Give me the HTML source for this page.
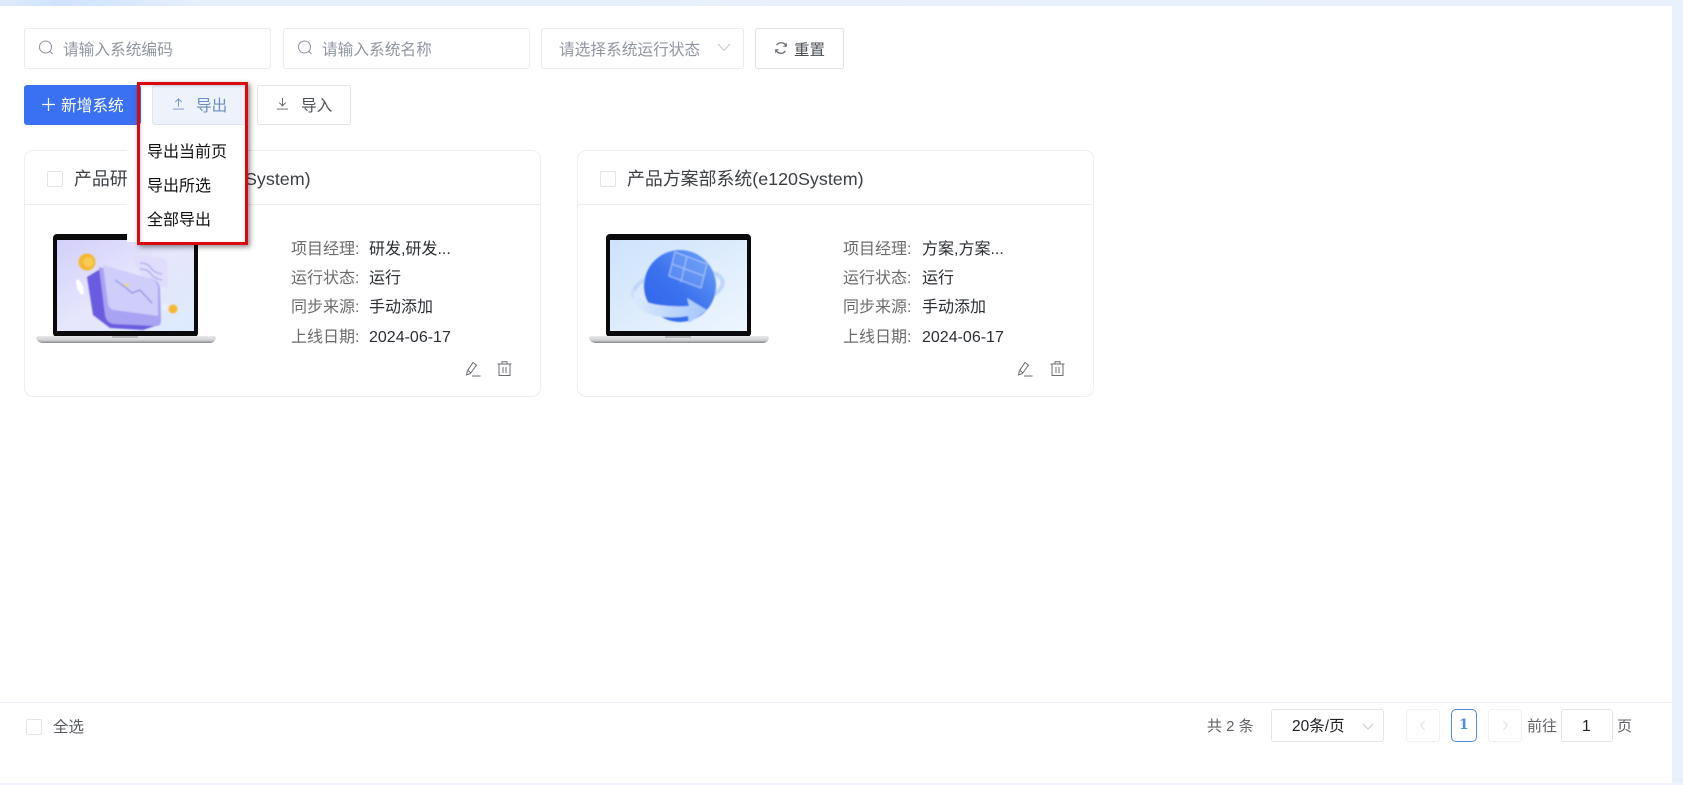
<!DOCTYPE html>
<html lang="zh"><head><meta charset="utf-8"><title>系统管理</title>
<style>
html,body{margin:0;padding:0;width:1683px;height:785px;overflow:hidden;background:#fff}
body{position:relative;font-family:"Liberation Sans","Noto Sans CJK SC",sans-serif;font-size:16px;color:#303133}
.a{position:absolute;box-sizing:border-box}
.t{position:absolute;white-space:nowrap;line-height:22px;height:22px}
.box{position:absolute;box-sizing:border-box;border:1px solid #eaecf0;border-radius:3px;background:#fff}
.ph{color:#8f96a2}
.lb{color:#6d6a6a}
.v{color:#2a2e33}
.cb{position:absolute;box-sizing:border-box;width:16px;height:16px;border:1px solid #e2e4e9;border-radius:2px;background:#fff}
.card{position:absolute;box-sizing:border-box;width:517px;height:247px;top:150px;border:1px solid #eceef2;border-radius:9px;background:#fff}
svg{position:absolute;overflow:visible}
</style></head><body>
<div class="a" style="left:0;top:0;width:1683px;height:6px;background:linear-gradient(90deg,#dfeafb 0,#cfe2fe 60px,#d6e6fd 110px,#e6effc 200px,#e8f0fd 100%)"></div>
<div class="a" style="left:1672px;top:0;width:11px;height:785px;background:#e9f1fd"></div>
<div class="a" style="left:0;top:783px;width:1683px;height:2px;background:#eef3fc"></div>

<!-- search row -->
<div class="box" style="left:24px;top:28px;width:247px;height:41px"></div>
<svg style="left:38px;top:40px" width="16" height="16" viewBox="0 0 16 16" fill="none" stroke="#8b93a0" stroke-width="1"><circle cx="7.5" cy="7" r="6"/><path d="M12 11.5l2.5 2.5"/></svg>
<span class="t ph" style="left:63px;top:40px;font-size:15.7px">请输入系统编码</span>
<div class="box" style="left:283px;top:28px;width:247px;height:41px"></div>
<svg style="left:297px;top:40px" width="16" height="16" viewBox="0 0 16 16" fill="none" stroke="#8b93a0" stroke-width="1"><circle cx="7.5" cy="7" r="6"/><path d="M12 11.5l2.5 2.5"/></svg>
<span class="t ph" style="left:322px;top:40px;font-size:15.7px">请输入系统名称</span>
<div class="box" style="left:541px;top:28px;width:203px;height:41px"></div>
<span class="t ph" style="left:559px;top:40px;font-size:15.7px">请选择系统运行状态</span>
<svg style="left:717px;top:43px" width="14" height="9" viewBox="0 0 14 9" fill="none" stroke="#c2c6cd" stroke-width="1"><path d="M1 1l6 6.5L13 1"/></svg>
<div class="box" style="left:755px;top:28px;width:89px;height:41px;border-color:#dfe2e6"></div>
<svg style="left:774px;top:41px" width="14" height="14" viewBox="0 0 14 14" fill="none" stroke="#5d6168" stroke-width="1.2"><path d="M12 5A5.3 5.3 0 0 0 2.6 4.2"/><path d="M2 9a5.3 5.3 0 0 0 9.4.8"/><path d="M12.3 2.2V5.3H9.4" stroke-width="1"/><path d="M1.7 11.8V8.7h2.9" stroke-width="1"/></svg>
<span class="t" style="left:794px;top:40px;font-size:15.5px;color:#4a4e55">重置</span>

<!-- action row -->
<div class="a" style="left:24px;top:85px;width:117px;height:40px;background:#3a71f2;border-radius:3px"></div>
<svg style="left:42px;top:98px" width="13" height="13" viewBox="0 0 14 14" stroke="#fff" stroke-width="1.3"><path d="M7 0v14M0 7h14"/></svg>
<span class="t" style="left:61px;top:96px;color:#fff;font-size:15.7px">新增系统</span>
<div class="box" style="left:152px;top:85px;width:94px;height:40px;background:#edf2fb;border-color:#dde4f0"></div>
<svg style="left:172px;top:97px" width="13" height="13" viewBox="0 0 14 14" fill="none" stroke="#6f93cf" stroke-width="1"><path d="M7 10.5V2M3.5 5.5L7 2l3.5 3.5M1 13h12"/></svg>
<span class="t" style="left:196px;top:96px;color:#6f8dc2;font-size:15.7px">导出</span>
<div class="box" style="left:257px;top:85px;width:94px;height:40px;border-color:#e0e3e7"></div>
<svg style="left:276px;top:97px" width="13" height="13" viewBox="0 0 14 14" fill="none" stroke="#5d6168" stroke-width="1"><path d="M7 1v8.5M3.5 6L7 9.5 10.5 6M1 13h12"/></svg>
<span class="t" style="left:301px;top:96px;color:#4a4e55;font-size:15.7px">导入</span>

<!-- card 1 -->
<div class="card" style="left:24px"><div class="a" style="left:0;top:53px;width:515px;height:1px;background:#eceef2"></div></div>
<div class="cb" style="left:47px;top:171px"></div>
<span class="t" style="left:74px;top:168px;font-size:17.9px;color:#3b3e43">产品研发部系统(e120System)</span>
<svg style="left:36px;top:234px" width="180" height="110" viewBox="0 0 180 110">
<defs>
<linearGradient id="s1" x1="0" y1="0" x2="1" y2="1"><stop offset="0" stop-color="#d3cffb"/><stop offset=".5" stop-color="#e6e6fc"/><stop offset="1" stop-color="#dcebfd"/></linearGradient>
<linearGradient id="s2" x1="0" y1="0" x2="1" y2="1"><stop offset="0" stop-color="#cde2fb"/><stop offset="1" stop-color="#eef6fe"/></linearGradient>
<linearGradient id="g" x1="1" y1="0" x2="0" y2="1"><stop offset="0" stop-color="#6ea3f8"/><stop offset=".55" stop-color="#3a70ee"/><stop offset="1" stop-color="#2f66ea"/></linearGradient>
<linearGradient id="rib" x1="0" y1="0" x2="1" y2="0"><stop offset="0" stop-color="#dbe9fd"/><stop offset="1" stop-color="#a4c6fa"/></linearGradient>
<linearGradient id="base" x1="0" y1="0" x2="0" y2="1"><stop offset="0" stop-color="#e8e9eb"/><stop offset=".6" stop-color="#d0d1d4"/><stop offset="1" stop-color="#85878a"/></linearGradient>
<filter id="b"><feGaussianBlur stdDeviation=".8"/></filter>
</defs>
<rect x="17" y="0" width="145" height="103" rx="4" fill="#0a0a0c"/>
<rect x="21" y="6" width="137" height="91" fill="url(#s1)"/>
<g filter="url(#b)">
<path d="M96 21l30 3q4 1 5 5l1 25-22-4-14-25z" fill="#dfddfb"/>
<path d="M104 29q8 0 11 5t11 6M104 35q8 0 11 5t11 6" fill="none" stroke="#9a97ea" stroke-width="1"/>
<path d="M51 43l15-9 56 54v3l-15 5-33-2-17-13z" fill="#6a5be0"/>
<path d="M63 33l53 12q7 2 8 9l1 33q0 6-7 5L77 90q-7-2-8-9z" fill="#a8a3f2"/>
<path d="M67 31l48 14q6 2 7 8l0 29-44-6q-5-1-6-6z" fill="#cfcdf9"/>
<path d="M79 46l10 7 7 6 8-3 12 13" fill="none" stroke="#7f7ce0" stroke-width="1"/>
<circle cx="91" cy="51" r="2" fill="#e6d980"/>
<circle cx="51" cy="28" r="8.5" fill="#f6b82e"/><circle cx="52.5" cy="28" r="5" fill="#f9cb55"/>
<circle cx="137" cy="75" r="4.5" fill="#f6b82e"/>
<ellipse cx="44" cy="53" rx="3" ry="8" fill="#fff" transform="rotate(-20 44 53)"/>
<circle cx="129" cy="73" r="3" fill="#e9f0fe"/>
</g>
<path d="M1 102h178l1 2q-1 4-5 5H6q-5-1-6-5z" fill="url(#base)"/>
<rect x="76" y="102" width="26" height="2" fill="#b9babd"/>
</svg>
<span class="t lb" style="left:291px;top:239px">项目经理:</span><span class="t v" style="left:369px;top:239px">研发,研发...</span>
<span class="t lb" style="left:291px;top:268px">运行状态:</span><span class="t v" style="left:369px;top:268px">运行</span>
<span class="t lb" style="left:291px;top:297px">同步来源:</span><span class="t v" style="left:369px;top:297px">手动添加</span>
<span class="t lb" style="left:291px;top:327px">上线日期:</span><span class="t v" style="left:369px;top:327px">2024-06-17</span>
<svg style="left:465px;top:361px" width="16" height="16" viewBox="0 0 16 16" fill="none" stroke="#6a6d72" stroke-width="1"><path d="M1.5 14l.8-4L8 1.5l3.5 2.5L5.5 12.5zM3 9.5l3 2.5M7 15h8.5"/></svg>
<svg style="left:497px;top:361px" width="15" height="15" viewBox="0 0 15 15" fill="none" stroke="#6a6d72" stroke-width="1"><path d="M0.5 3h14M5 3V.8h5V3M2 3v11.5h11V3M6 6v6M9 6v6"/></svg>

<!-- card 2 -->
<div class="card" style="left:577px"><div class="a" style="left:0;top:53px;width:515px;height:1px;background:#eceef2"></div></div>
<div class="cb" style="left:600px;top:171px"></div>
<span class="t" style="left:627px;top:168px;font-size:17.9px;color:#3b3e43">产品方案部系统(e120System)</span>
<svg style="left:589px;top:234px" width="180" height="110" viewBox="0 0 180 110">
<rect x="17" y="0" width="145" height="103" rx="4" fill="#0a0a0c"/>
<rect x="21" y="6" width="137" height="91" fill="url(#s2)"/>
<g filter="url(#b)">
<ellipse cx="89" cy="54" rx="45" ry="18" fill="none" stroke="#bdd6fb" stroke-width="4" transform="rotate(-8 89 54)"/>
<circle cx="91" cy="52" r="36" fill="url(#g)"/>
<path d="M86 18l32 12-6 24-32-12zM98 22l-6 26M83 30l32 12" fill="#77a5f7" fill-opacity=".45" stroke="#a9c6fa" stroke-width="1"/>
<path d="M44 54q4 14 26 17 16 2 30 1l-2-8 20 12-18 13-1-7q-16 3-32 0-25-5-23-28z" fill="url(#rib)"/>
</g>
<path d="M1 102h178l1 2q-1 4-5 5H6q-5-1-6-5z" fill="url(#base)"/>
<rect x="76" y="102" width="26" height="2" fill="#b9babd"/>
</svg>
<span class="t lb" style="left:843px;top:239px">项目经理:</span><span class="t v" style="left:922px;top:239px">方案,方案...</span>
<span class="t lb" style="left:843px;top:268px">运行状态:</span><span class="t v" style="left:922px;top:268px">运行</span>
<span class="t lb" style="left:843px;top:297px">同步来源:</span><span class="t v" style="left:922px;top:297px">手动添加</span>
<span class="t lb" style="left:843px;top:327px">上线日期:</span><span class="t v" style="left:922px;top:327px">2024-06-17</span>
<svg style="left:1017px;top:361px" width="16" height="16" viewBox="0 0 16 16" fill="none" stroke="#6a6d72" stroke-width="1"><path d="M1.5 14l.8-4L8 1.5l3.5 2.5L5.5 12.5zM3 9.5l3 2.5M7 15h8.5"/></svg>
<svg style="left:1050px;top:361px" width="15" height="15" viewBox="0 0 15 15" fill="none" stroke="#6a6d72" stroke-width="1"><path d="M0.5 3h14M5 3V.8h5V3M2 3v11.5h11V3M6 6v6M9 6v6"/></svg>

<!-- dropdown -->
<div class="a" style="left:127px;top:126px;width:119px;height:116px;background:#fff"></div>
<span class="t" style="left:147px;top:142px;color:#111">导出当前页</span>
<span class="t" style="left:147px;top:176px;color:#111">导出所选</span>
<span class="t" style="left:147px;top:210px;color:#111">全部导出</span>
<div class="a" style="left:137px;top:82px;width:111px;height:163px;border:3.5px solid #d9090f;box-shadow:2px 2px 5px rgba(0,0,0,.45),inset 1px 1px 3px rgba(0,0,0,.15)"></div>

<!-- footer -->
<div class="a" style="left:0;top:702px;width:1672px;height:1px;background:#eceef5"></div>
<div class="cb" style="left:26px;top:719px"></div>
<span class="t" style="left:53px;top:717px;color:#55585e;font-size:15.5px">全选</span>
<span class="t" style="left:1207px;top:716px;color:#606266;font-size:15px">共 2 条</span>
<div class="box" style="left:1271px;top:709px;width:113px;height:33px;border-color:#e2e4e9"></div>
<span class="t" style="left:1292px;top:716px;color:#1d1f23;font-size:15.5px">20条/页</span>
<svg style="left:1362px;top:723px" width="12" height="7" viewBox="0 0 12 7" fill="none" stroke="#c8ccd3" stroke-width="1"><path d="M1 1l5 5 5-5"/></svg>
<div class="box" style="left:1406px;top:709px;width:34px;height:33px;border-color:#f0f1f4"></div>
<svg style="left:1419px;top:720px" width="7" height="11" viewBox="0 0 8 12" fill="none" stroke="#dfe1e5" stroke-width="1.2"><path d="M6.5 1L1.5 6l5 5"/></svg>
<div class="box" style="left:1451px;top:709px;width:26px;height:33px;border-color:#4a8ce6;border-radius:5px"></div>
<span class="t" style="left:1459px;top:714px;color:#4a8ce6;font-weight:bold;font-family:'DejaVu Serif',serif;font-size:14px">1</span>
<div class="box" style="left:1488px;top:709px;width:34px;height:33px;border-color:#f0f1f4"></div>
<svg style="left:1502px;top:720px" width="7" height="11" viewBox="0 0 8 12" fill="none" stroke="#dfe1e5" stroke-width="1.2"><path d="M1.5 1l5 5-5 5"/></svg>
<span class="t" style="left:1527px;top:716px;color:#606266;font-size:15px">前往</span>
<div class="box" style="left:1561px;top:709px;width:52px;height:33px;border-color:#e2e4e9"></div>
<span class="t" style="left:1582px;top:716px;color:#1d1f23;font-size:15.5px">1</span>
<span class="t" style="left:1617px;top:716px;color:#606266;font-size:15px">页</span>
</body></html>
